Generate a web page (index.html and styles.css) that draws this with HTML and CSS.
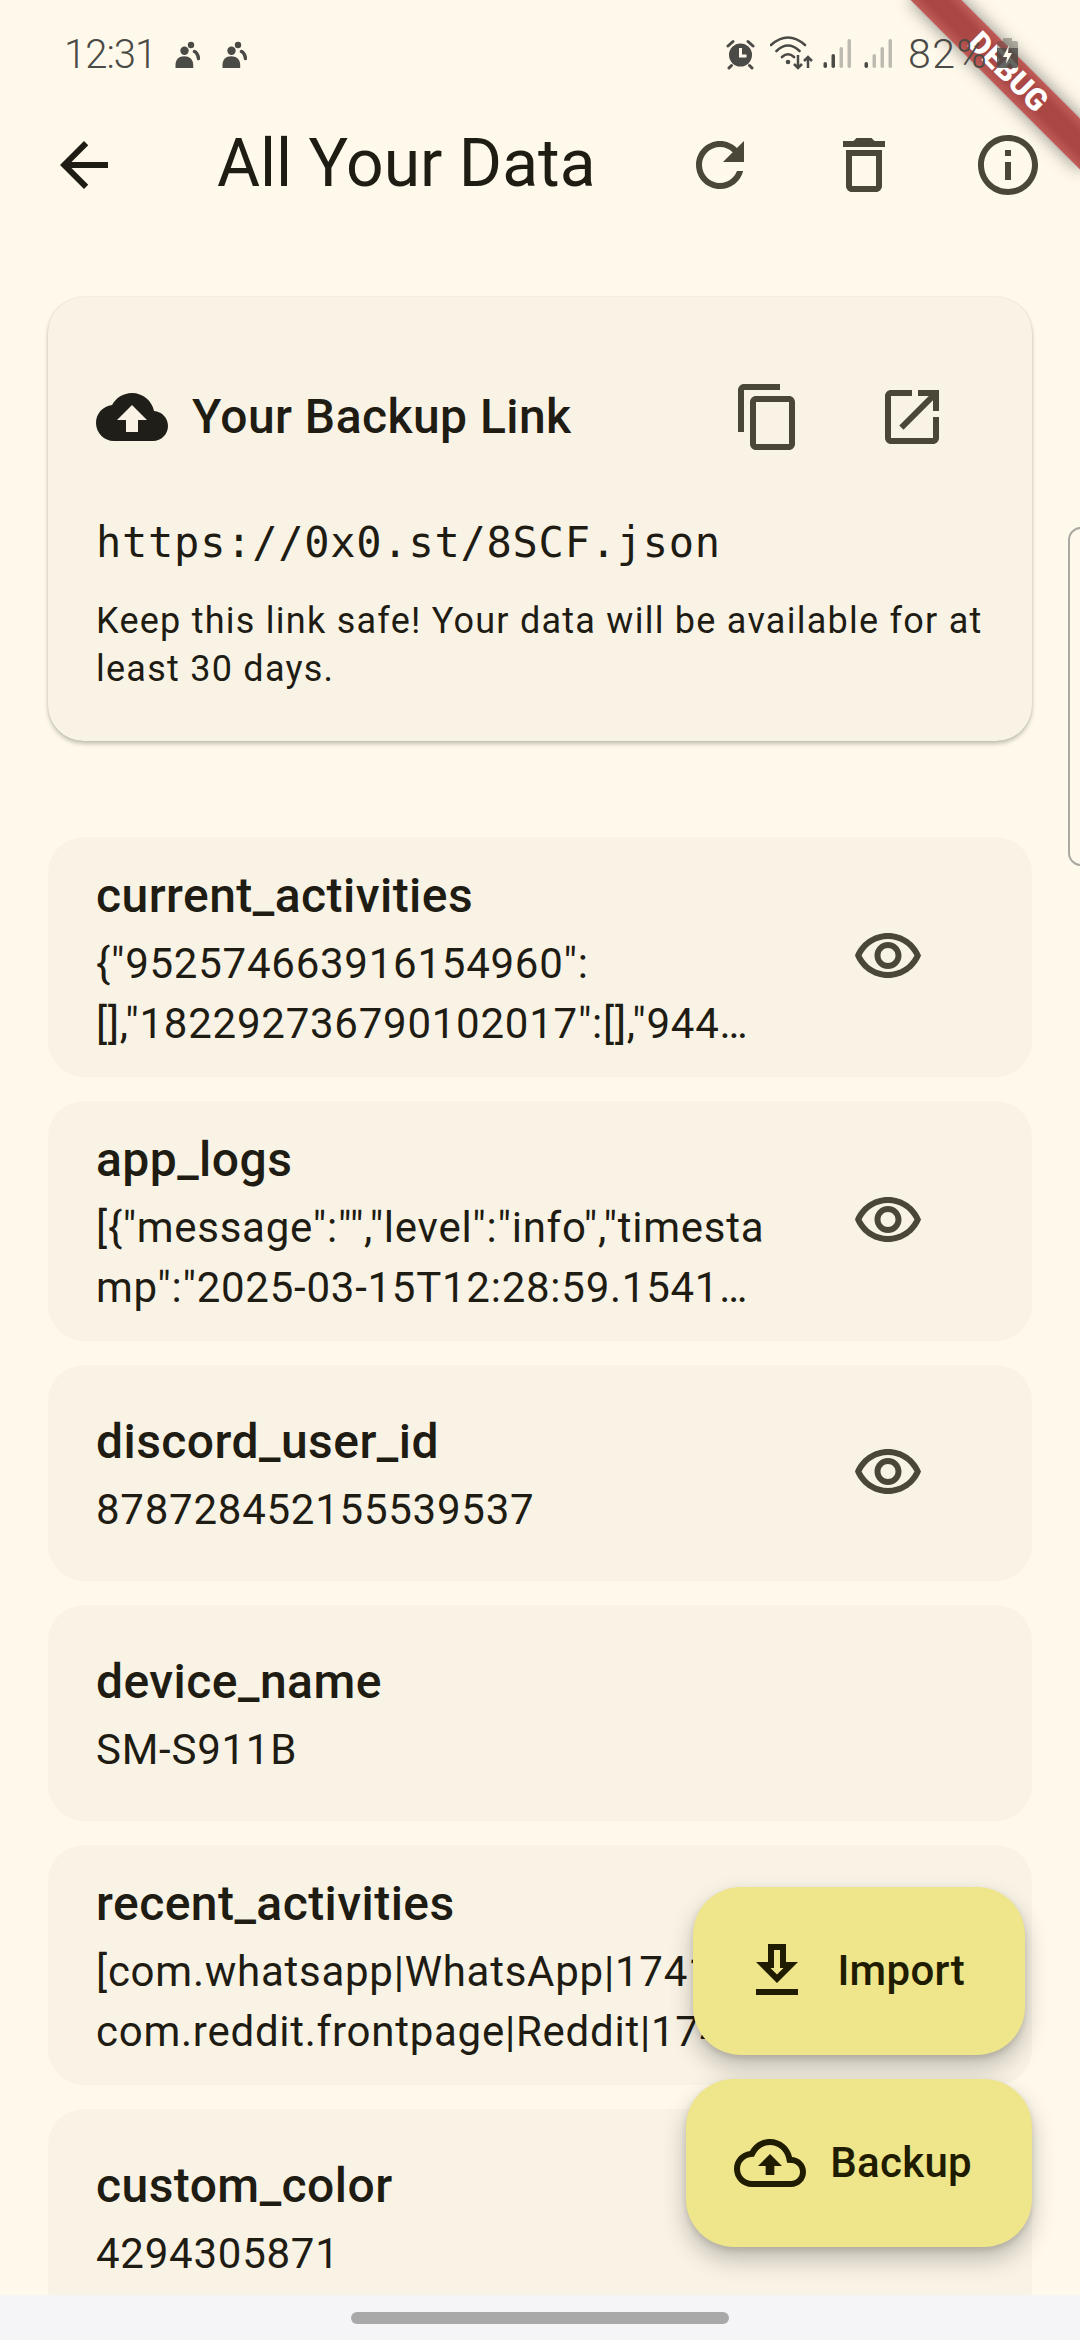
FILE: index.html
```html
<!DOCTYPE html>
<html lang="en">
<head>
<meta charset="utf-8">
<title>All Your Data</title>
<link rel="stylesheet" href="styles.css">
</head>
<body>
<svg class="defs" width="0" height="0" aria-hidden="true">
  <symbol id="person" viewBox="0 0 25 34">
    <circle cx="9.5" cy="14.7" r="4.2" fill="currentColor"/>
    <path d="M.5 32v-3c0-5.5 3.5-8.8 8.7-8.8s9 3.3 9 8.8v3z" fill="currentColor"/>
    <circle cx="16" cy="9" r="3.2" fill="currentColor"/>
    <path d="M19.5 15.5c2 1 3.5 3.5 4 7" fill="none" stroke="currentColor" stroke-width="3.5" stroke-linecap="round"/>
  </symbol>
  <symbol id="eye" viewBox="0 0 24 24">
    <path d="M12 6c3.79 0 7.17 2.13 8.82 5.5C19.17 14.87 15.79 17 12 17s-7.17-2.13-8.82-5.5C4.83 8.13 8.21 6 12 6m0-2C7 4 2.73 7.11 1 11.5 2.73 15.89 7 19 12 19s9.27-3.11 11-7.5C21.27 7.11 17 4 12 4zm0 5c1.38 0 2.5 1.12 2.5 2.5S13.38 14 12 14s-2.5-1.12-2.5-2.5S10.62 9 12 9m0-2c-2.48 0-4.5 2.02-4.5 4.5S9.52 16 12 16s4.5-2.02 4.5-4.5S14.48 7 12 7z" fill="currentColor"/>
  </symbol>
</svg>
<div class="screen">
  <div class="main">
    <div class="statusbar">
      <span class="time">12:31</span>
      <svg class="st-person" width="25" height="34"><use href="#person"/></svg>
      <svg class="st-person" width="25" height="34"><use href="#person"/></svg>
      <div class="status-right">
        <svg class="st-alarm" width="29" height="34" viewBox="0 0 29 34">
          <circle cx="14.5" cy="19" r="11.5" fill="currentColor"/>
          <path d="M2 10l5-4.5M27 10l-5-4.5M5.5 29.5l-2.5 2.500M23.500 29.500l2.500 2.500" stroke="currentColor" stroke-width="3" stroke-linecap="round" fill="none"/>
          <path d="M14.500 12v8h6" stroke="#fff9eb" stroke-width="3" fill="none"/>
        </svg>
        <svg class="st-wifi" width="45" height="34" viewBox="0 0 45 34">
          <path d="M1 9Q18-6 35 9M6.500 15Q18 4 29.500 15M12 21Q18 15.500 24 21" fill="none" stroke="currentColor" stroke-width="2.600" stroke-linecap="round"/>
          <circle cx="18" cy="26" r="2.300" fill="currentColor"/>
          <path d="M28 19v13M24 28l4 4 4-4M38 32V21M34 25l4-4 4 4" fill="none" stroke="currentColor" stroke-width="2.500"/>
        </svg>
        <svg class="st-signal" width="28" height="34" viewBox="0 0 28 34">
          <rect x=".5" y="26" width="3.500" height="6" rx="1.700" fill="#4a4a46"/>
          <rect x="8.500" y="18" width="3.500" height="14" rx="1.700" fill="#4a4a46"/>
          <rect x="16.500" y="11" width="3.500" height="21" rx="1.700" fill="#bdbbb1"/>
          <rect x="24.500" y="3" width="3.500" height="29" rx="1.700" fill="#bdbbb1"/>
        </svg>
        <svg class="st-signal second" width="28" height="34" viewBox="0 0 28 34">
          <rect x=".5" y="26" width="3.500" height="6" rx="1.700" fill="#4a4a46"/>
          <rect x="8.500" y="18" width="3.500" height="14" rx="1.700" fill="#bdbbb1"/>
          <rect x="16.500" y="11" width="3.500" height="21" rx="1.700" fill="#bdbbb1"/>
          <rect x="24.500" y="3" width="3.500" height="29" rx="1.700" fill="#bdbbb1"/>
        </svg>
        <span class="battery-text">82%</span>
        <svg class="st-battery" width="21" height="34" viewBox="0 0 21 34">
          <path d="M6 2h9v3h4a2 2 0 0 1 2 2v5H0V7a2 2 0 0 1 2-2h4z" fill="#4a4a46" opacity=".4"/>
          <path d="M0 12h21v18a2 2 0 0 1-2 2H2a2 2 0 0 1-2-2z" fill="#4a4a46" opacity=".85"/>
          <path d="M12 9l-6 12h4l-1 7 6-11h-4z" fill="#fff9eb"/>
        </svg>
      </div>
    </div>

    <header class="appbar">
      <button class="icon-btn back" aria-label="Back">
        <svg class="ic ink" viewBox="0 0 24 24"><path d="M20 11H7.830l5.590-5.590L12 4l-8 8 8 8 1.410-1.410L7.830 13H20v-2z" fill="currentColor"/></svg>
      </button>
      <h1 class="title">All Your Data</h1>
      <button class="icon-btn" aria-label="Refresh">
        <svg class="ic" viewBox="0 0 24 24"><path d="M17.650 6.350C16.200 4.900 14.210 4 12 4c-4.420 0-7.990 3.580-7.990 8s3.570 8 7.990 8c3.730 0 6.840-2.550 7.730-6h-2.080c-.82 2.330-3.040 4-5.650 4-3.310 0-6-2.690-6-6s2.690-6 6-6c1.660 0 3.140.69 4.220 1.780L13 11h7V4l-2.350 2.350z" fill="currentColor"/></svg>
      </button>
      <button class="icon-btn" aria-label="Delete">
        <svg class="ic" viewBox="0 0 24 24"><path d="M16 9v10H8V9h8m-1.500-6h-5l-1 1H5v2h14V4h-3.500l-1-1zM18 7H6v12c0 1.100.9 2 2 2h8c1.100 0 2-.9 2-2V7z" fill="currentColor"/></svg>
      </button>
      <button class="icon-btn" aria-label="Info">
        <svg class="ic" viewBox="0 0 24 24"><path d="M11 7h2v2h-2zm0 4h2v6h-2zm1-9C6.480 2 2 6.480 2 12s4.480 10 10 10 10-4.480 10-10S17.520 2 12 2zm0 18c-4.410 0-8-3.590-8-8s3.590-8 8-8 8 3.590 8 8-3.590 8-8 8z" fill="currentColor"/></svg>
      </button>
    </header>

    <div class="content">
      <section class="backup-card">
        <div class="backup-head">
          <svg class="ic ink cloud" viewBox="0 0 24 24"><path d="M19.350 10.040C18.670 6.590 15.640 4 12 4 9.110 4 6.600 5.640 5.350 8.040 2.340 8.360 0 10.910 0 14c0 3.310 2.690 6 6 6h13c2.760 0 5-2.240 5-5 0-2.640-2.050-4.780-4.650-4.960zM14 13v4h-4v-4H7l5-5 5 5h-3z" fill="currentColor"/></svg>
          <h2 class="backup-title">Your Backup Link</h2>
          <div class="backup-actions">
            <button class="icon-btn" aria-label="Copy">
              <svg class="ic" viewBox="0 0 24 24"><path d="M16 1H4c-1.100 0-2 .9-2 2v14h2V3h12V1zm3 4H8c-1.100 0-2 .9-2 2v14c0 1.100.9 2 2 2h11c1.100 0 2-.9 2-2V7c0-1.100-.9-2-2-2zm0 16H8V7h11v14z" fill="currentColor"/></svg>
            </button>
            <button class="icon-btn" aria-label="Open">
              <svg class="ic" viewBox="0 0 24 24"><path d="M19 19H5V5h7V3H5c-1.110 0-2 .9-2 2v14c0 1.100.89 2 2 2h14c1.100 0 2-.9 2-2v-7h-2v7zM14 3v2h3.590l-9.830 9.830 1.410 1.410L19 6.410V10h2V3h-7z" fill="currentColor"/></svg>
            </button>
          </div>
        </div>
        <p class="backup-url">https://0x0.st/8SCF.json</p>
        <p class="backup-note">Keep this link safe! Your data will be available for at<br>least 30 days.</p>
      </section>

      <div class="list">
        <article class="item">
          <div class="item-body">
            <h3 class="item-key">current_activities</h3>
            <p class="item-val">{"952574663916154960":<br>[],"182292736790102017":[],"944…</p>
          </div>
          <svg class="ic eye"><use href="#eye"/></svg>
        </article>
        <article class="item">
          <div class="item-body">
            <h3 class="item-key">app_logs</h3>
            <p class="item-val">[{"message":"","level":"info","timesta<br>mp":"2025-03-15T12:28:59.1541…</p>
          </div>
          <svg class="ic eye"><use href="#eye"/></svg>
        </article>
        <article class="item">
          <div class="item-body">
            <h3 class="item-key">discord_user_id</h3>
            <p class="item-val">878728452155539537</p>
          </div>
          <svg class="ic eye"><use href="#eye"/></svg>
        </article>
        <article class="item">
          <div class="item-body">
            <h3 class="item-key">device_name</h3>
            <p class="item-val">SM-S911B</p>
          </div>
        </article>
        <article class="item">
          <div class="item-body">
            <h3 class="item-key">recent_activities</h3>
            <p class="item-val">[com.whatsapp|WhatsApp|1741|<br>com.reddit.frontpage|Reddit|1741…</p>
          </div>
        </article>
        <article class="item">
          <div class="item-body">
            <h3 class="item-key">custom_color</h3>
            <p class="item-val">4294305871</p>
          </div>
        </article>
      </div>
    </div>
  </div>

  <nav class="navbar"><span class="handle"></span></nav>

  <div class="fabs">
    <button class="fab fab-import">
      <svg class="ic" viewBox="0 0 24 24"><path d="M5 20h14v-2H5v2zM19 9h-4V3H9v6H5l7 7 7-7zm-8 2V5h2v6h1.170L12 13.170 9.830 11H11z" fill="currentColor"/></svg>
      <span>Import</span>
    </button>
    <button class="fab">
      <svg class="ic" viewBox="0 0 24 24"><path d="M19.350 10.040C18.670 6.590 15.640 4 12 4 9.110 4 6.600 5.640 5.350 8.040 2.340 8.360 0 10.910 0 14c0 3.310 2.690 6 6 6h13c2.760 0 5-2.240 5-5 0-2.640-2.050-4.780-4.650-4.960zM19 18H6c-2.210 0-4-1.790-4-4 0-2.050 1.530-3.760 3.560-3.970l1.070-.11.5-.95C8.080 7.140 9.940 6 12 6c2.620 0 4.880 1.860 5.390 4.430l.3 1.500 1.530.11c1.560.1 2.780 1.410 2.780 2.960 0 1.650-1.350 3-3 3zM8 13h2.550v3h2.900v-3H16l-4-4z" fill="currentColor"/></svg>
      <span>Backup</span>
    </button>
  </div>

  <div class="scroll-tab"></div>
  <div class="debug-ribbon">DEBUG</div>
</div>
</body>
</html>
```
FILE: styles.css
```css
* { box-sizing: border-box; }
html, body { margin: 0; padding: 0; }
body { background: #fff9eb; font-family: Roboto, "Liberation Sans", sans-serif; color: #1e1c13; }
h1, h2, h3, p { margin: 0; font-weight: 400; }
button { border: 0; background: none; padding: 0; font: inherit; color: inherit; }
.defs { position: absolute; }

.screen { position: relative; width: 1080px; height: 2340px; overflow: hidden; display: flex; flex-direction: column; }
.main { flex: 1; min-height: 0; overflow: hidden; }

/* status bar: system chrome, painted over the app's debug ribbon */
.statusbar { position: relative; z-index: 2; height: 81px; padding: 36px 62px 0 64px; display: flex; align-items: flex-start; color: #4a4a46; }
.time { width: 88px; font-size: 40px; font-weight: 300; line-height: 37px; letter-spacing: -1px; white-space: nowrap; }
.st-person { margin-left: 22px; }
.st-person:first-of-type { margin-left: 23px; }
.status-right { margin-left: auto; display: flex; align-items: flex-start; }
.st-wifi { margin-left: 15px; }
.st-signal { margin-left: 8px; }
.st-signal.second { margin-left: 13px; }
.battery-text { margin-left: 16px; width: 84px; font-size: 41px; font-weight: 300; line-height: 36px; letter-spacing: 1.5px; white-space: nowrap; }
.st-battery { margin-left: 5px; }

/* app bar */
.appbar { height: 168px; padding-left: 12px; display: flex; align-items: center; }
.title { flex: 1; margin: -2px 0 0 61px; font-size: 66px; line-height: 96px; white-space: nowrap; }
.icon-btn { flex: none; width: 144px; height: 144px; display: flex; align-items: center; justify-content: center; color: #4a4739; }
.ic { width: 72px; height: 72px; display: block; flex: none; }
.ink { color: #1e1c13; }

.content { padding: 48px 48px 0; }

/* backup card */
.backup-card { background: #f9f3e5; border-radius: 36px; padding: 48px; box-shadow: 0 3px 4px rgba(0, 0, 0, .22), 0 0 2px rgba(0, 0, 0, .12); margin-bottom: 96px; }
.backup-head { height: 144px; display: flex; align-items: center; }
.cloud { color: #201e19; }
.backup-title { flex: 1; margin-left: 24px; font-size: 48px; line-height: 72px; font-weight: 500; letter-spacing: .45px; white-space: nowrap; }
.backup-actions { display: flex; }
.backup-url { margin-top: 24px; font-family: "DejaVu Sans Mono", "Liberation Mono", monospace; font-size: 42px; line-height: 60px; letter-spacing: .75px; white-space: nowrap; }
.backup-note { margin-top: 24px; font-size: 36px; line-height: 48px; letter-spacing: 1.25px; white-space: nowrap; }

/* list */
.list { display: flex; flex-direction: column; gap: 24px; }
.item { min-height: 216px; background: #f9f3e5; border-radius: 36px; padding: 24px 108px 24px 48px; display: flex; align-items: center; flex: none; }
.item-body { flex: 1; min-width: 0; margin-bottom: -1px; }
.item-key { font-size: 48px; line-height: 70px; margin-bottom: 3px; font-weight: 500; letter-spacing: .45px; white-space: nowrap; }
.item-val { font-size: 42px; line-height: 60px; letter-spacing: .75px; white-space: nowrap; }
.eye { color: #4a4739; }

/* nav */
.navbar { flex: none; height: 45px; background: #f5f5f7; padding-top: 17px; display: flex; justify-content: center; }
.handle { width: 378px; height: 12px; border-radius: 6px; background: #a9a9a9; }

/* FABs */
.fabs { position: absolute; right: 48px; bottom: 93px; display: flex; flex-direction: column; align-items: flex-end; gap: 24px; }
.fab { height: 168px; border-radius: 48px; background: #efe58a; color: #201c00; padding: 0 60px 0 48px; display: flex; align-items: center; gap: 24px; font-size: 42px; line-height: 60px; font-weight: 500; letter-spacing: .3px; box-shadow: 0 12px 24px rgba(0, 0, 0, .24), 0 3px 6px rgba(0, 0, 0, .12); }
.fab-import { margin-right: 7px; }

/* overlays */
.scroll-tab { position: absolute; top: 527px; right: -14px; width: 26px; height: 339px; border: 2px solid #aaa9a2; border-radius: 15px; }
.debug-ribbon { position: absolute; left: 888px; top: 54px; width: 240px; height: 36px; transform: rotate(45deg); background: linear-gradient(rgba(183, 28, 28, .627), rgba(183, 28, 28, .627)), linear-gradient(rgba(0, 0, 0, .2), rgba(0, 0, 0, .42) 30%, rgba(0, 0, 0, .42) 70%, rgba(0, 0, 0, .2)); box-shadow: 0 0 18px rgba(0, 0, 0, .45); color: #fff; font-size: 30.6px; font-weight: 900; line-height: 36px; text-align: center; }
```
